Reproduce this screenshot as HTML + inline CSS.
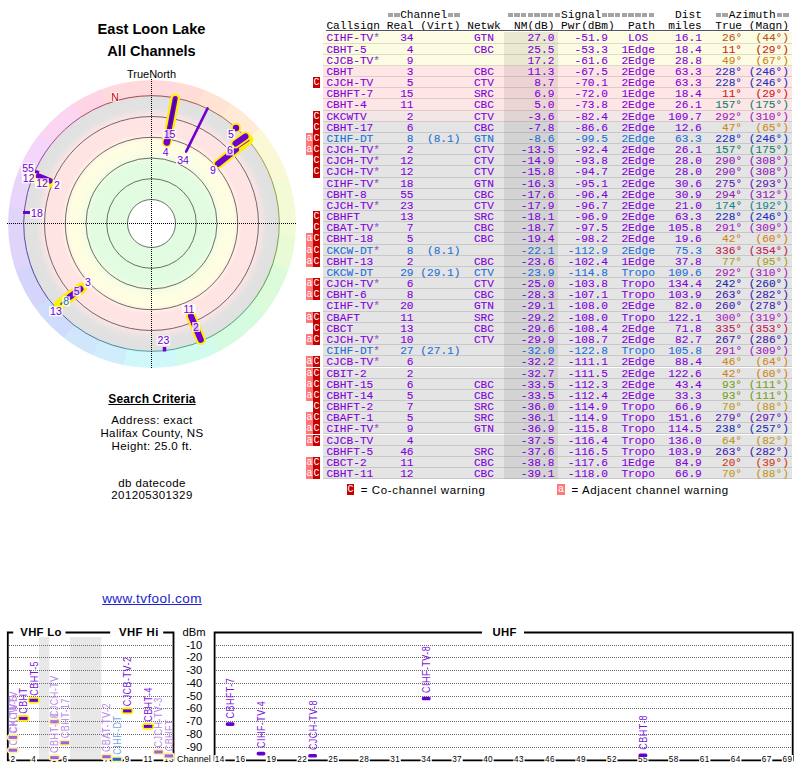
<!DOCTYPE html>
<html><head><meta charset="utf-8"><style>
*{margin:0;padding:0}
html,body{width:800px;height:768px;overflow:hidden;background:#fff;position:relative}
.mono{font-family:"Liberation Mono",monospace;font-size:11.18px;white-space:pre;position:absolute;left:326.4px;line-height:11.15px}
.rt{margin-top:1px;-webkit-text-stroke:0.1px}
.hline{position:absolute;left:326px;width:463px;top:30px;height:1px;background:#555}
.hd{color:#000}
.hd2{}
.eq{font-weight:normal;color:transparent;background:linear-gradient(to bottom,transparent 4.1px,#a4a4a4 4.1px,#a4a4a4 8px,transparent 8px);-webkit-mask-image:repeating-linear-gradient(to right,transparent 0 0.6px,#000 0.6px 6px,transparent 6px 6.704px)}
.row{position:absolute;left:323px;width:469px;height:11.15px;box-shadow:inset 0 -1px 0 rgba(0,0,0,0.12)}
.row.y{background:#fcfce2}
.row.p{background:#ffe6e6}
.row.m{background:#f2e6e6}
.row.g{background:#e4e4e4}
.nmcol{position:absolute;left:504px;width:54px;background:rgba(0,0,0,0.075)}
.mk{position:absolute;width:7px;height:11.15px;color:#fff;font-family:"Liberation Mono",monospace;font-size:10px;line-height:11px;text-align:center}
.ma{left:306px;background:#ff7878}
.mc{left:313px;background:#c40000}
.ttl{position:absolute;left:0;width:303px;text-align:center;font-family:"Liberation Sans",sans-serif;font-weight:bold;font-size:14.6px;line-height:17px}
.tn{position:absolute;left:0;width:303px;text-align:center;font-family:"Liberation Sans",sans-serif;font-size:11px;line-height:12px}
.rt .st{font-style:normal;color:#9060c0}
</style></head><body>
<div style="position:absolute;left:7.5px;top:79.5px;width:288px;height:288px;border-radius:50%;background:conic-gradient(from 0deg,#ffd9dc 0deg 9.2deg,#ffdcd5 9.2deg 21.2deg,#ffe3d5 21.2deg 33.5deg,#ffebd5 33.5deg 48.5deg,#fbf9d5 48.5deg 70.6deg,#f2fbd5 70.6deg 94.8deg,#e8fbd5 94.8deg 108.2deg,#dcfbda 108.2deg 130deg,#d5fbe1 130deg 152.4deg,#d0fbed 152.4deg 169.6deg,#d0f7f9 169.6deg 191.4deg,#d0edfb 191.4deg 204.4deg,#d0e6fb 204.4deg 217.6deg,#d0dcfb 217.6deg 234deg,#d5d5fb 234deg 251.4deg,#dfd5fb 251.4deg 276.8deg,#e8d5fb 276.8deg 291.3deg,#f4d5fb 291.3deg 308deg,#fbd5f2 308deg 326.2deg,#ffd5e6 326.2deg 339deg,#ffd9dc 339deg 360deg)"></div>
<svg style="position:absolute;left:0;top:0" width="300" height="380"><defs><radialGradient id="rg" cx="151.5" cy="223.5" r="128" gradientUnits="userSpaceOnUse"><stop offset="0" stop-color="#e2fce2"/><stop offset="0.47" stop-color="#e2fce2"/><stop offset="0.555" stop-color="#fcfde2"/><stop offset="0.64" stop-color="#fffde2"/><stop offset="0.71" stop-color="#ffe4e4"/><stop offset="0.835" stop-color="#ffe4e4"/><stop offset="0.90" stop-color="#e2e2e2"/><stop offset="1" stop-color="#e0e0e0"/></radialGradient></defs><circle cx="151.5" cy="223.5" r="127.8" fill="url(#rg)"/><circle cx="151.5" cy="223.5" r="24" fill="#fff"/><circle cx="151.5" cy="223.5" r="24" fill="none" stroke="#4a4a4a" stroke-width="0.8"/><circle cx="151.5" cy="223.5" r="44.8" fill="none" stroke="#4a4a4a" stroke-width="0.8"/><circle cx="151.5" cy="223.5" r="65.5" fill="none" stroke="#4a4a4a" stroke-width="0.8"/><circle cx="151.5" cy="223.5" r="86.2" fill="none" stroke="#4a4a4a" stroke-width="0.8"/><circle cx="151.5" cy="223.5" r="107" fill="none" stroke="#4a4a4a" stroke-width="0.8"/><path d="M151.50,95.70 A127.8,127.8 0 0 1 171.93,97.34" fill="none" stroke="#9b3b43" stroke-width="0.9"/><path d="M171.93,97.34 A127.8,127.8 0 0 1 197.72,104.35" fill="none" stroke="#9b4b3b" stroke-width="0.9"/><path d="M197.72,104.35 A127.8,127.8 0 0 1 222.04,116.93" fill="none" stroke="#9b5b3b" stroke-width="0.9"/><path d="M222.04,116.93 A127.8,127.8 0 0 1 247.22,138.82" fill="none" stroke="#9b6d3b" stroke-width="0.9"/><path d="M247.22,138.82 A127.8,127.8 0 0 1 272.04,181.05" fill="none" stroke="#9b963b" stroke-width="0.9"/><path d="M272.04,181.05 A127.8,127.8 0 0 1 278.85,234.19" fill="none" stroke="#849b3b" stroke-width="0.9"/><path d="M278.85,234.19 A127.8,127.8 0 0 1 272.91,263.42" fill="none" stroke="#6b9b3b" stroke-width="0.9"/><path d="M272.91,263.42 A127.8,127.8 0 0 1 249.40,305.65" fill="none" stroke="#419b3b" stroke-width="0.9"/><path d="M249.40,305.65 A127.8,127.8 0 0 1 210.71,336.76" fill="none" stroke="#3b9b59" stroke-width="0.9"/><path d="M210.71,336.76 A127.8,127.8 0 0 1 174.57,349.20" fill="none" stroke="#3b9b7c" stroke-width="0.9"/><path d="M174.57,349.20 A127.8,127.8 0 0 1 126.24,348.78" fill="none" stroke="#3b979b" stroke-width="0.9"/><path d="M126.24,348.78 A127.8,127.8 0 0 1 98.71,339.89" fill="none" stroke="#3b7c9b" stroke-width="0.9"/><path d="M98.71,339.89 A127.8,127.8 0 0 1 73.52,324.75" fill="none" stroke="#3b6c9b" stroke-width="0.9"/><path d="M73.52,324.75 A127.8,127.8 0 0 1 48.11,298.62" fill="none" stroke="#3b569b" stroke-width="0.9"/><path d="M48.11,298.62 A127.8,127.8 0 0 1 30.38,264.26" fill="none" stroke="#3b3b9b" stroke-width="0.9"/><path d="M30.38,264.26 A127.8,127.8 0 0 1 24.60,208.37" fill="none" stroke="#543b9b" stroke-width="0.9"/><path d="M24.60,208.37 A127.8,127.8 0 0 1 32.43,177.08" fill="none" stroke="#6b3b9b" stroke-width="0.9"/><path d="M32.43,177.08 A127.8,127.8 0 0 1 50.79,144.82" fill="none" stroke="#8a3b9b" stroke-width="0.9"/><path d="M50.79,144.82 A127.8,127.8 0 0 1 80.41,117.30" fill="none" stroke="#9b3b84" stroke-width="0.9"/><path d="M80.41,117.30 A127.8,127.8 0 0 1 105.70,104.19" fill="none" stroke="#9b3b62" stroke-width="0.9"/><path d="M105.70,104.19 A127.8,127.8 0 0 1 151.50,95.70" fill="none" stroke="#9b3b43" stroke-width="0.9"/><line x1="7" y1="223.5" x2="296" y2="223.5" stroke="#000" stroke-width="1" stroke-dasharray="1 1"/><line x1="151.5" y1="79" x2="151.5" y2="368" stroke="#000" stroke-width="1" stroke-dasharray="1 1"/><line x1="166.8" y1="142.5" x2="175.2" y2="98.5" stroke="#ffef00" stroke-width="9.5" stroke-linecap="round"/><line x1="168" y1="136" x2="175.2" y2="98.5" stroke="#7000d0" stroke-width="5" stroke-linecap="round"/><line x1="166.8" y1="142.5" x2="168" y2="136.5" stroke="#7000d0" stroke-width="6.5" stroke-linecap="round"/><line x1="169.3" y1="128" x2="175" y2="99.5" stroke="#3a0088" stroke-width="1.6" stroke-linecap="round"/><line x1="186.2" y1="151.5" x2="207.5" y2="108.5" stroke="#7000d0" stroke-width="2.7" stroke-linecap="round"/><line x1="218" y1="163.8" x2="248.5" y2="139.5" stroke="#ffef00" stroke-width="10" stroke-linecap="round"/><line x1="218" y1="163.8" x2="236" y2="149.5" stroke="#7000d0" stroke-width="6" stroke-linecap="round"/><line x1="234" y1="149.5" x2="248" y2="140" stroke="#7000d0" stroke-width="3" stroke-linecap="round"/><line x1="235.5" y1="143.5" x2="245.5" y2="136.5" stroke="#ffef00" stroke-width="10" stroke-linecap="round"/><line x1="235.5" y1="143.5" x2="245.5" y2="136.5" stroke="#7000d0" stroke-width="6" stroke-linecap="round"/><circle cx="236" cy="128" r="5" fill="#ffef00"/><circle cx="236" cy="128" r="3.2" fill="#7000d0"/><line x1="33.5" y1="177.5" x2="49.5" y2="182.5" stroke="#ffef00" stroke-width="10" stroke-linecap="round"/><line x1="38.5" y1="176" x2="50" y2="180.8" stroke="#7000d0" stroke-width="5.5" stroke-linecap="round"/><line x1="35" y1="171.5" x2="39" y2="172.5" stroke="#7000d0" stroke-width="3" stroke-linecap="butt"/><line x1="23" y1="212.5" x2="30" y2="212.5" stroke="#7000d0" stroke-width="3" stroke-linecap="butt"/><line x1="59.5" y1="304.5" x2="81.5" y2="288" stroke="#ffef00" stroke-width="11" stroke-linecap="round"/><line x1="69.5" y1="297" x2="80.5" y2="289" stroke="#7000d0" stroke-width="6" stroke-linecap="round"/><line x1="61" y1="304" x2="65" y2="301" stroke="#2070d0" stroke-width="2" stroke-linecap="round"/><line x1="191" y1="316" x2="200.8" y2="339.8" stroke="#ffef00" stroke-width="10" stroke-linecap="round"/><line x1="191" y1="316" x2="200.8" y2="339.8" stroke="#7000d0" stroke-width="6" stroke-linecap="round"/><line x1="164.5" y1="347" x2="164.5" y2="351.5" stroke="#7000d0" stroke-width="3.5" stroke-linecap="butt"/><rect x="162.6" y="129.1" width="13.8" height="10" fill="#fff" fill-opacity="0.8"/><text x="169.5" y="137.89999999999998" fill="#7000d0" text-anchor="middle" font-family="Liberation Sans" font-size="10.5">15</text><rect x="161.8" y="147.3" width="7.9" height="10" fill="#fff" fill-opacity="0.8"/><text x="165.7" y="156.1" fill="#7000d0" text-anchor="middle" font-family="Liberation Sans" font-size="10.5">4</text><rect x="176.1" y="154.8" width="13.8" height="10" fill="#fff" fill-opacity="0.8"/><text x="183" y="163.6" fill="#7000d0" text-anchor="middle" font-family="Liberation Sans" font-size="10.5">34</text><rect x="227.1" y="129.1" width="7.9" height="10" fill="#fff" fill-opacity="0.8"/><text x="231" y="137.89999999999998" fill="#7000d0" text-anchor="middle" font-family="Liberation Sans" font-size="10.5">5</text><rect x="226.1" y="145.4" width="7.9" height="10" fill="#fff" fill-opacity="0.8"/><text x="230" y="154.2" fill="#7000d0" text-anchor="middle" font-family="Liberation Sans" font-size="10.5">6</text><rect x="209.1" y="165.4" width="7.9" height="10" fill="#fff" fill-opacity="0.8"/><text x="213" y="174.2" fill="#7000d0" text-anchor="middle" font-family="Liberation Sans" font-size="10.5">9</text><rect x="21.1" y="163.3" width="13.8" height="10" fill="#fff" fill-opacity="0.8"/><text x="28" y="172.1" fill="#7000d0" text-anchor="middle" font-family="Liberation Sans" font-size="10.5">55</text><rect x="21.8" y="173.3" width="13.8" height="10" fill="#fff" fill-opacity="0.8"/><text x="28.7" y="182.1" fill="#7000d0" text-anchor="middle" font-family="Liberation Sans" font-size="10.5">12</text><rect x="35.2" y="178.3" width="13.8" height="10" fill="#fff" fill-opacity="0.8"/><text x="42.1" y="187.1" fill="#7000d0" text-anchor="middle" font-family="Liberation Sans" font-size="10.5">12</text><rect x="52.8" y="180.1" width="7.9" height="10" fill="#fff" fill-opacity="0.8"/><text x="56.8" y="188.89999999999998" fill="#7000d0" text-anchor="middle" font-family="Liberation Sans" font-size="10.5">2</text><rect x="30.0" y="208.4" width="13.8" height="10" fill="#fff" fill-opacity="0.8"/><text x="36.9" y="217.2" fill="#7000d0" text-anchor="middle" font-family="Liberation Sans" font-size="10.5">18</text><rect x="84.0" y="277.5" width="7.9" height="10" fill="#fff" fill-opacity="0.8"/><text x="88" y="286.3" fill="#7000d0" text-anchor="middle" font-family="Liberation Sans" font-size="10.5">3</text><rect x="72.8" y="286.5" width="7.9" height="10" fill="#fff" fill-opacity="0.8"/><text x="76.7" y="295.3" fill="#7000d0" text-anchor="middle" font-family="Liberation Sans" font-size="10.5">5</text><rect x="62.2" y="296.3" width="7.9" height="10" fill="#fff" fill-opacity="0.8"/><text x="66.2" y="305.09999999999997" fill="#1a70d8" text-anchor="middle" font-family="Liberation Sans" font-size="10.5">8</text><rect x="49.0" y="306.4" width="13.8" height="10" fill="#fff" fill-opacity="0.8"/><text x="55.9" y="315.2" fill="#7000d0" text-anchor="middle" font-family="Liberation Sans" font-size="10.5">13</text><rect x="182.0" y="304.1" width="13.8" height="10" fill="#fff" fill-opacity="0.8"/><text x="188.9" y="312.9" fill="#7000d0" text-anchor="middle" font-family="Liberation Sans" font-size="10.5">11</text><rect x="192.1" y="322.0" width="7.9" height="10" fill="#fff" fill-opacity="0.8"/><text x="196" y="330.8" fill="#7000d0" text-anchor="middle" font-family="Liberation Sans" font-size="10.5">2</text><rect x="156.5" y="335.6" width="13.8" height="10" fill="#fff" fill-opacity="0.8"/><text x="163.4" y="344.4" fill="#7000d0" text-anchor="middle" font-family="Liberation Sans" font-size="10.5">23</text><rect x="111" y="92" width="8" height="10" fill="#fff" fill-opacity="0.6"/><text x="115" y="101" fill="#d00000" text-anchor="middle" font-family="Liberation Sans" font-size="10.5">N</text></svg>
<div class="ttl" style="top:21.2px">East Loon Lake</div>
<div class="ttl" style="top:43px">All Channels</div>
<div class="tn" style="top:67.6px">TrueNorth</div>
<div class="mono hd" style="top:9.90px">         <b class="eq">==</b>Channel<b class="eq">==</b>       <b class="eq">========</b>Signal<b class="eq">========</b>   Dist  <b class="eq">==</b>Azimuth<b class="eq">==</b></div>
<div class="mono hd hd2" style="top:20.90px">Callsign Real (Virt) Netwk  NM(dB) Pwr(dBm)  Path  miles  True (Magn)</div>
<div class="hline"></div>
<div class="row y" style="top:32.40px"></div>
<div class="row y" style="top:43.57px"></div>
<div class="row y" style="top:54.74px"></div>
<div class="row p" style="top:65.91px"></div>
<div class="row p" style="top:77.08px"></div>
<div class="mk mc" style="top:77.08px">C</div>
<div class="row p" style="top:88.25px"></div>
<div class="row p" style="top:99.42px"></div>
<div class="row m" style="top:110.59px"></div>
<div class="mk mc" style="top:110.59px">C</div>
<div class="row g" style="top:121.76px"></div>
<div class="mk mc" style="top:121.76px">C</div>
<div class="row g" style="top:132.93px"></div>
<div class="mk ma" style="top:132.93px">a</div>
<div class="mk mc" style="top:132.93px">C</div>
<div class="row g" style="top:144.10px"></div>
<div class="mk ma" style="top:144.10px">a</div>
<div class="mk mc" style="top:144.10px">C</div>
<div class="row g" style="top:155.27px"></div>
<div class="mk mc" style="top:155.27px">C</div>
<div class="row g" style="top:166.44px"></div>
<div class="mk mc" style="top:166.44px">C</div>
<div class="row g" style="top:177.61px"></div>
<div class="row g" style="top:188.78px"></div>
<div class="row g" style="top:199.95px"></div>
<div class="row g" style="top:211.12px"></div>
<div class="mk mc" style="top:211.12px">C</div>
<div class="row g" style="top:222.29px"></div>
<div class="mk mc" style="top:222.29px">C</div>
<div class="row g" style="top:233.46px"></div>
<div class="mk ma" style="top:233.46px">a</div>
<div class="mk mc" style="top:233.46px">C</div>
<div class="row g" style="top:244.63px"></div>
<div class="mk ma" style="top:244.63px">a</div>
<div class="mk mc" style="top:244.63px">C</div>
<div class="row g" style="top:255.80px"></div>
<div class="mk ma" style="top:255.80px">a</div>
<div class="mk mc" style="top:255.80px">C</div>
<div class="row g" style="top:266.97px"></div>
<div class="row g" style="top:278.14px"></div>
<div class="mk ma" style="top:278.14px">a</div>
<div class="mk mc" style="top:278.14px">C</div>
<div class="row g" style="top:289.31px"></div>
<div class="mk ma" style="top:289.31px">a</div>
<div class="mk mc" style="top:289.31px">C</div>
<div class="row g" style="top:300.48px"></div>
<div class="row g" style="top:311.65px"></div>
<div class="mk ma" style="top:311.65px">a</div>
<div class="mk mc" style="top:311.65px">C</div>
<div class="row g" style="top:322.82px"></div>
<div class="mk mc" style="top:322.82px">C</div>
<div class="row g" style="top:333.99px"></div>
<div class="mk ma" style="top:333.99px">a</div>
<div class="mk mc" style="top:333.99px">C</div>
<div class="row g" style="top:345.16px"></div>
<div class="row g" style="top:356.33px"></div>
<div class="mk ma" style="top:356.33px">a</div>
<div class="mk mc" style="top:356.33px">C</div>
<div class="row g" style="top:367.50px"></div>
<div class="mk ma" style="top:367.50px">a</div>
<div class="mk mc" style="top:367.50px">C</div>
<div class="row g" style="top:378.67px"></div>
<div class="mk ma" style="top:378.67px">a</div>
<div class="mk mc" style="top:378.67px">C</div>
<div class="row g" style="top:389.84px"></div>
<div class="mk ma" style="top:389.84px">a</div>
<div class="mk mc" style="top:389.84px">C</div>
<div class="row g" style="top:401.01px"></div>
<div class="mk mc" style="top:401.01px">C</div>
<div class="row g" style="top:412.18px"></div>
<div class="mk ma" style="top:412.18px">a</div>
<div class="mk mc" style="top:412.18px">C</div>
<div class="row g" style="top:423.35px"></div>
<div class="mk ma" style="top:423.35px">a</div>
<div class="mk mc" style="top:423.35px">C</div>
<div class="row g" style="top:434.52px"></div>
<div class="mk ma" style="top:434.52px">a</div>
<div class="mk mc" style="top:434.52px">C</div>
<div class="row g" style="top:445.69px"></div>
<div class="row g" style="top:456.86px"></div>
<div class="mk ma" style="top:456.86px">a</div>
<div class="mk mc" style="top:456.86px">C</div>
<div class="row g" style="top:468.03px"></div>
<div class="mk ma" style="top:468.03px">a</div>
<div class="mk mc" style="top:468.03px">C</div>
<div class="nmcol" style="top:32.40px;height:446.80px"></div>
<div class="mono rt" style="top:32.40px;color:#8200dc">CIHF-TV<i class="st">*</i>   34         GTN     27.0   -51.9   LOS    16.1<span style="color:#b85818">   26°  (44°)</span></div>
<div class="mono rt" style="top:43.57px;color:#8200dc">CBHT-5      4         CBC     25.5   -53.3  1Edge   18.4<span style="color:#d01818">   11°  (29°)</span></div>
<div class="mono rt" style="top:54.74px;color:#8200dc">CJCB-TV<i class="st">*</i>    9                 17.2   -61.6  2Edge   28.8<span style="color:#c88418">   49°  (67°)</span></div>
<div class="mono rt" style="top:65.91px;color:#8200dc">CBHT        3         CBC     11.3   -67.5  2Edge   63.3<span style="color:#2030c0">  228° (246°)</span></div>
<div class="mono rt" style="top:77.08px;color:#8200dc">CJCH-TV     5         CTV      8.7   -70.1  2Edge   63.3<span style="color:#2030c0">  228° (246°)</span></div>
<div class="mono rt" style="top:88.25px;color:#8200dc">CBHFT-7    15         SRC      6.9   -72.0  1Edge   18.4<span style="color:#d01818">   11°  (29°)</span></div>
<div class="mono rt" style="top:99.42px;color:#8200dc">CBHT-4     11         CBC      5.0   -73.8  2Edge   26.1<span style="color:#108070">  157° (175°)</span></div>
<div class="mono rt" style="top:110.59px;color:#8200dc">CKCWTV      2         CTV     -3.6   -82.4  2Edge  109.7<span style="color:#a820b8">  292° (310°)</span></div>
<div class="mono rt" style="top:121.76px;color:#8200dc">CBHT-17     6         CBC     -7.8   -86.6  2Edge   12.6<span style="color:#d08818">   47°  (65°)</span></div>
<div class="mono rt" style="top:132.93px;color:#1a70d8">CIHF-DT     8  (8.1)  GTN     -8.6   -99.5  2Edge   63.3<span style="color:#2030c0">  228° (246°)</span></div>
<div class="mono rt" style="top:144.10px;color:#8200dc">CJCH-TV<i class="st">*</i>    2         CTV    -13.5   -92.4  2Edge   26.1<span style="color:#108070">  157° (175°)</span></div>
<div class="mono rt" style="top:155.27px;color:#8200dc">CJCH-TV<i class="st">*</i>   12         CTV    -14.9   -93.8  2Edge   28.0<span style="color:#9020b8">  290° (308°)</span></div>
<div class="mono rt" style="top:166.44px;color:#8200dc">CJCH-TV<i class="st">*</i>   12         CTV    -15.8   -94.7  2Edge   28.0<span style="color:#9020b8">  290° (308°)</span></div>
<div class="mono rt" style="top:177.61px;color:#8200dc">CIHF-TV<i class="st">*</i>   18         GTN    -16.3   -95.1  2Edge   30.6<span style="color:#6020b8">  275° (293°)</span></div>
<div class="mono rt" style="top:188.78px;color:#8200dc">CBHT-8     55         CBC    -17.6   -96.4  2Edge   30.9<span style="color:#9020b8">  294° (312°)</span></div>
<div class="mono rt" style="top:199.95px;color:#8200dc">CJCH-TV<i class="st">*</i>   23         CTV    -17.9   -96.7  2Edge   21.0<span style="color:#108888">  174° (192°)</span></div>
<div class="mono rt" style="top:211.12px;color:#8200dc">CBHFT      13         SRC    -18.1   -96.9  2Edge   63.3<span style="color:#2030c0">  228° (246°)</span></div>
<div class="mono rt" style="top:222.29px;color:#8200dc">CBAT-TV<i class="st">*</i>    7         CBC    -18.7   -97.5  2Edge  105.8<span style="color:#a020c0">  291° (309°)</span></div>
<div class="mono rt" style="top:233.46px;color:#8200dc">CBHT-18     5         CBC    -19.4   -98.2  2Edge   19.6<span style="color:#d08418">   42°  (60°)</span></div>
<div class="mono rt" style="top:244.63px;color:#1a70d8">CKCW-DT<i class="st">*</i>    8  (8.1)         -22.1  -112.9  2Edge   75.3<span style="color:#c02050">  336° (354°)</span></div>
<div class="mono rt" style="top:255.80px;color:#8200dc">CBHT-13     2         CBC    -23.6  -102.4  1Edge   37.8<span style="color:#a8a020">   77°  (95°)</span></div>
<div class="mono rt" style="top:266.97px;color:#1a70d8">CKCW-DT    29 (29.1)  CTV    -23.9  -114.8  Tropo  109.6<span style="color:#a820b8">  292° (310°)</span></div>
<div class="mono rt" style="top:278.14px;color:#8200dc">CJCH-TV<i class="st">*</i>    6         CTV    -25.0  -103.8  Tropo  134.4<span style="color:#2828a8">  242° (260°)</span></div>
<div class="mono rt" style="top:289.31px;color:#8200dc">CBHT-6      8         CBC    -28.3  -107.1  Tropo  103.9<span style="color:#4020b0">  263° (282°)</span></div>
<div class="mono rt" style="top:300.48px;color:#8200dc">CIHF-TV<i class="st">*</i>   20         GTN    -29.1  -108.0  2Edge   82.0<span style="color:#4020b0">  260° (278°)</span></div>
<div class="mono rt" style="top:311.65px;color:#8200dc">CBAFT      11         SRC    -29.2  -108.0  Tropo  122.1<span style="color:#b020c0">  300° (319°)</span></div>
<div class="mono rt" style="top:322.82px;color:#8200dc">CBCT       13         CBC    -29.6  -108.4  2Edge   71.8<span style="color:#c02060">  335° (353°)</span></div>
<div class="mono rt" style="top:333.99px;color:#8200dc">CJCH-TV<i class="st">*</i>   10         CTV    -29.9  -108.7  2Edge   82.7<span style="color:#4420a8">  267° (286°)</span></div>
<div class="mono rt" style="top:345.16px;color:#1a70d8">CIHF-DT<i class="st">*</i>   27 (27.1)         -32.0  -122.8  Tropo  105.8<span style="color:#a020c0">  291° (309°)</span></div>
<div class="mono rt" style="top:356.33px;color:#8200dc">CJCB-TV<i class="st">*</i>    6                -32.2  -111.1  2Edge   88.4<span style="color:#d08818">   46°  (64°)</span></div>
<div class="mono rt" style="top:367.50px;color:#8200dc">CBIT-2      2                -32.7  -111.5  2Edge  122.6<span style="color:#d08418">   42°  (60°)</span></div>
<div class="mono rt" style="top:378.67px;color:#8200dc">CBHT-15     6         CBC    -33.5  -112.3  2Edge   43.4<span style="color:#70a020">   93° (111°)</span></div>
<div class="mono rt" style="top:389.84px;color:#8200dc">CBHT-14     5         CBC    -33.5  -112.4  2Edge   33.3<span style="color:#70a020">   93° (111°)</span></div>
<div class="mono rt" style="top:401.01px;color:#8200dc">CBHFT-2     7         SRC    -36.0  -114.9  Tropo   66.9<span style="color:#c09a18">   70°  (88°)</span></div>
<div class="mono rt" style="top:412.18px;color:#8200dc">CBAFT-1     5         SRC    -36.1  -114.9  Tropo  151.6<span style="color:#6020b8">  279° (297°)</span></div>
<div class="mono rt" style="top:423.35px;color:#8200dc">CIHF-TV<i class="st">*</i>    9         GTN    -36.9  -115.8  Tropo  114.5<span style="color:#2030b8">  238° (257°)</span></div>
<div class="mono rt" style="top:434.52px;color:#8200dc">CJCB-TV     4                -37.5  -116.4  Tropo  136.0<span style="color:#c09418">   64°  (82°)</span></div>
<div class="mono rt" style="top:445.69px;color:#8200dc">CBHFT-5    46         SRC    -37.6  -116.5  Tropo  103.9<span style="color:#4020b0">  263° (282°)</span></div>
<div class="mono rt" style="top:456.86px;color:#8200dc">CBCT-2     11         CBC    -38.8  -117.6  1Edge   84.9<span style="color:#d03818">   20°  (39°)</span></div>
<div class="mono rt" style="top:468.03px;color:#8200dc">CBHT-11    12         CBC    -39.1  -118.0  Tropo   66.9<span style="color:#c09a18">   70°  (88°)</span></div>
<div style="position:absolute;left:0;width:304px;text-align:center;font-family:'Liberation Sans',sans-serif;white-space:nowrap;top:391.8px;font-size:12px;font-weight:bold;line-height:14px;letter-spacing:0.13px"><u>Search Criteria</u></div>
<div style="position:absolute;left:0;width:304px;text-align:center;font-family:'Liberation Sans',sans-serif;white-space:nowrap;top:413.8px;font-size:11.5px;line-height:13px;letter-spacing:0.38px">Address: exact</div>
<div style="position:absolute;left:0;width:304px;text-align:center;font-family:'Liberation Sans',sans-serif;white-space:nowrap;top:426.8px;font-size:11.5px;line-height:13px;letter-spacing:0.38px">Halifax County, NS</div>
<div style="position:absolute;left:0;width:304px;text-align:center;font-family:'Liberation Sans',sans-serif;white-space:nowrap;top:439.6px;font-size:11.5px;line-height:13px;letter-spacing:0.38px">Height: 25.0 ft.</div>
<div style="position:absolute;left:0;width:304px;text-align:center;font-family:'Liberation Sans',sans-serif;white-space:nowrap;top:476.6px;font-size:11.5px;line-height:13px;letter-spacing:0.38px">db datecode</div>
<div style="position:absolute;left:0;width:304px;text-align:center;font-family:'Liberation Sans',sans-serif;white-space:nowrap;top:488.5px;font-size:11.5px;line-height:13px;letter-spacing:0.38px">201205301329</div>
<div style="position:absolute;left:0;width:304px;text-align:center;font-family:'Liberation Sans',sans-serif;white-space:nowrap;top:591px;font-size:13.5px;line-height:15px;letter-spacing:0.42px;color:#2222cc"><u>www.tvfool.com</u></div>
<div class="mk mc" style="left:347px;top:483.5px;height:11px;width:7px;">C</div>
<div style="position:absolute;font-family:'Liberation Sans',sans-serif;font-size:11.5px;line-height:13px;white-space:nowrap;letter-spacing:0.63px;left:360.7px;top:484px">= Co-channel warning</div>
<div class="mk ma" style="left:557px;top:483.5px;height:11px;width:8px;">a</div>
<div style="position:absolute;font-family:'Liberation Sans',sans-serif;font-size:11.5px;line-height:13px;white-space:nowrap;letter-spacing:0.63px;left:571.5px;top:484px">= Adjacent channel warning</div>
<svg style="position:absolute;left:0;top:600px" width="800" height="168"><g transform="translate(0,-600)"><rect x="38.9" y="637" width="10.4" height="123" fill="#e8e8e8"/><rect x="70.1" y="637" width="31.2" height="123" fill="#e8e8e8"/><line x1="9" y1="645.5" x2="173" y2="645.5" stroke="#6a6a6a" stroke-width="1" stroke-dasharray="1 1"/><line x1="216" y1="645.5" x2="792" y2="645.5" stroke="#6a6a6a" stroke-width="1" stroke-dasharray="1 1"/><line x1="9" y1="657.5" x2="173" y2="657.5" stroke="#6a6a6a" stroke-width="1" stroke-dasharray="1 1"/><line x1="216" y1="657.5" x2="792" y2="657.5" stroke="#6a6a6a" stroke-width="1" stroke-dasharray="1 1"/><line x1="9" y1="670.5" x2="173" y2="670.5" stroke="#6a6a6a" stroke-width="1" stroke-dasharray="1 1"/><line x1="216" y1="670.5" x2="792" y2="670.5" stroke="#6a6a6a" stroke-width="1" stroke-dasharray="1 1"/><line x1="9" y1="683.5" x2="173" y2="683.5" stroke="#6a6a6a" stroke-width="1" stroke-dasharray="1 1"/><line x1="216" y1="683.5" x2="792" y2="683.5" stroke="#6a6a6a" stroke-width="1" stroke-dasharray="1 1"/><line x1="9" y1="696.5" x2="173" y2="696.5" stroke="#6a6a6a" stroke-width="1" stroke-dasharray="1 1"/><line x1="216" y1="696.5" x2="792" y2="696.5" stroke="#6a6a6a" stroke-width="1" stroke-dasharray="1 1"/><line x1="9" y1="708.5" x2="173" y2="708.5" stroke="#6a6a6a" stroke-width="1" stroke-dasharray="1 1"/><line x1="216" y1="708.5" x2="792" y2="708.5" stroke="#6a6a6a" stroke-width="1" stroke-dasharray="1 1"/><line x1="9" y1="721.5" x2="173" y2="721.5" stroke="#6a6a6a" stroke-width="1" stroke-dasharray="1 1"/><line x1="216" y1="721.5" x2="792" y2="721.5" stroke="#6a6a6a" stroke-width="1" stroke-dasharray="1 1"/><line x1="9" y1="734.5" x2="173" y2="734.5" stroke="#6a6a6a" stroke-width="1" stroke-dasharray="1 1"/><line x1="216" y1="734.5" x2="792" y2="734.5" stroke="#6a6a6a" stroke-width="1" stroke-dasharray="1 1"/><line x1="9" y1="747.5" x2="173" y2="747.5" stroke="#6a6a6a" stroke-width="1" stroke-dasharray="1 1"/><line x1="216" y1="747.5" x2="792" y2="747.5" stroke="#6a6a6a" stroke-width="1" stroke-dasharray="1 1"/><path d="M13.2,632.5 H7.8 V760.3 H173.5 V632.5 H163.2" fill="none" stroke="#000" stroke-width="1.8"/><line x1="65.5" y1="632.5" x2="110.2" y2="632.5" stroke="#000" stroke-width="1.8"/><path d="M482,632.5 H214.6 V760.3 H792.7 V632.5 H524" fill="none" stroke="#000" stroke-width="1.8"/><text x="20.3" y="635.9" font-family="Liberation Sans" font-weight="bold" font-size="11.3" letter-spacing="0.3">VHF Lo</text><text x="118.9" y="635.9" font-family="Liberation Sans" font-weight="bold" font-size="11.3" letter-spacing="0.5">VHF Hi</text><text x="492.6" y="636" font-family="Liberation Sans" font-weight="bold" font-size="11.3" letter-spacing="0.3">UHF</text><text x="182.5" y="635.8" font-family="Liberation Sans" font-size="11.2">dBm</text><text x="202.3" y="649.2" text-anchor="end" font-family="Liberation Sans" font-size="11.2">-10</text><text x="202.3" y="661.2" text-anchor="end" font-family="Liberation Sans" font-size="11.2">-20</text><text x="202.3" y="674.2" text-anchor="end" font-family="Liberation Sans" font-size="11.2">-30</text><text x="202.3" y="687.2" text-anchor="end" font-family="Liberation Sans" font-size="11.2">-40</text><text x="202.3" y="700.2" text-anchor="end" font-family="Liberation Sans" font-size="11.2">-50</text><text x="202.3" y="712.2" text-anchor="end" font-family="Liberation Sans" font-size="11.2">-60</text><text x="202.3" y="725.2" text-anchor="end" font-family="Liberation Sans" font-size="11.2">-70</text><text x="202.3" y="738.2" text-anchor="end" font-family="Liberation Sans" font-size="11.2">-80</text><text x="202.3" y="751.2" text-anchor="end" font-family="Liberation Sans" font-size="11.2">-90</text><text x="177" y="761.5" font-family="Liberation Sans" font-size="9" letter-spacing="0.05">Channel</text><rect x="9.6" y="755" width="6.6" height="7" fill="#fff"/><text x="12.9" y="762" text-anchor="middle" font-family="Liberation Sans" font-size="8.2" letter-spacing="0.4">2</text><rect x="30.4" y="755" width="6.6" height="7" fill="#fff"/><text x="33.7" y="762" text-anchor="middle" font-family="Liberation Sans" font-size="8.2" letter-spacing="0.4">4</text><rect x="51.2" y="755" width="6.6" height="7" fill="#fff"/><text x="54.5" y="762" text-anchor="middle" font-family="Liberation Sans" font-size="8.2" letter-spacing="0.4">5</text><rect x="61.6" y="755" width="6.6" height="7" fill="#fff"/><text x="64.9" y="762" text-anchor="middle" font-family="Liberation Sans" font-size="8.2" letter-spacing="0.4">6</text><rect x="103.2" y="755" width="6.6" height="7" fill="#fff"/><text x="106.5" y="762" text-anchor="middle" font-family="Liberation Sans" font-size="8.2" letter-spacing="0.4">7</text><rect x="124.0" y="755" width="6.6" height="7" fill="#fff"/><text x="127.3" y="762" text-anchor="middle" font-family="Liberation Sans" font-size="8.2" letter-spacing="0.4">9</text><rect x="142.5" y="755" width="11.2" height="7" fill="#fff"/><text x="148.1" y="762" text-anchor="middle" font-family="Liberation Sans" font-size="8.2" letter-spacing="0.4">11</text><rect x="163.3" y="755" width="11.2" height="7" fill="#fff"/><text x="168.9" y="762" text-anchor="middle" font-family="Liberation Sans" font-size="8.2" letter-spacing="0.4">13</text><rect x="214.2" y="755" width="11.2" height="7" fill="#fff"/><text x="219.8" y="762" text-anchor="middle" font-family="Liberation Sans" font-size="8.2" letter-spacing="0.4">14</text><rect x="234.8" y="755" width="11.2" height="7" fill="#fff"/><text x="240.4" y="762" text-anchor="middle" font-family="Liberation Sans" font-size="8.2" letter-spacing="0.4">16</text><rect x="265.8" y="755" width="11.2" height="7" fill="#fff"/><text x="271.4" y="762" text-anchor="middle" font-family="Liberation Sans" font-size="8.2" letter-spacing="0.4">19</text><rect x="296.7" y="755" width="11.2" height="7" fill="#fff"/><text x="302.3" y="762" text-anchor="middle" font-family="Liberation Sans" font-size="8.2" letter-spacing="0.4">22</text><rect x="327.7" y="755" width="11.2" height="7" fill="#fff"/><text x="333.3" y="762" text-anchor="middle" font-family="Liberation Sans" font-size="8.2" letter-spacing="0.4">25</text><rect x="358.6" y="755" width="11.2" height="7" fill="#fff"/><text x="364.2" y="762" text-anchor="middle" font-family="Liberation Sans" font-size="8.2" letter-spacing="0.4">28</text><rect x="389.6" y="755" width="11.2" height="7" fill="#fff"/><text x="395.2" y="762" text-anchor="middle" font-family="Liberation Sans" font-size="8.2" letter-spacing="0.4">31</text><rect x="420.6" y="755" width="11.2" height="7" fill="#fff"/><text x="426.2" y="762" text-anchor="middle" font-family="Liberation Sans" font-size="8.2" letter-spacing="0.4">34</text><rect x="451.5" y="755" width="11.2" height="7" fill="#fff"/><text x="457.1" y="762" text-anchor="middle" font-family="Liberation Sans" font-size="8.2" letter-spacing="0.4">37</text><rect x="482.5" y="755" width="11.2" height="7" fill="#fff"/><text x="488.1" y="762" text-anchor="middle" font-family="Liberation Sans" font-size="8.2" letter-spacing="0.4">40</text><rect x="513.4" y="755" width="11.2" height="7" fill="#fff"/><text x="519.0" y="762" text-anchor="middle" font-family="Liberation Sans" font-size="8.2" letter-spacing="0.4">43</text><rect x="544.4" y="755" width="11.2" height="7" fill="#fff"/><text x="550.0" y="762" text-anchor="middle" font-family="Liberation Sans" font-size="8.2" letter-spacing="0.4">46</text><rect x="575.4" y="755" width="11.2" height="7" fill="#fff"/><text x="581.0" y="762" text-anchor="middle" font-family="Liberation Sans" font-size="8.2" letter-spacing="0.4">49</text><rect x="606.3" y="755" width="11.2" height="7" fill="#fff"/><text x="611.9" y="762" text-anchor="middle" font-family="Liberation Sans" font-size="8.2" letter-spacing="0.4">52</text><rect x="637.3" y="755" width="11.2" height="7" fill="#fff"/><text x="642.9" y="762" text-anchor="middle" font-family="Liberation Sans" font-size="8.2" letter-spacing="0.4">55</text><rect x="668.2" y="755" width="11.2" height="7" fill="#fff"/><text x="673.8" y="762" text-anchor="middle" font-family="Liberation Sans" font-size="8.2" letter-spacing="0.4">58</text><rect x="699.2" y="755" width="11.2" height="7" fill="#fff"/><text x="704.8" y="762" text-anchor="middle" font-family="Liberation Sans" font-size="8.2" letter-spacing="0.4">61</text><rect x="730.2" y="755" width="11.2" height="7" fill="#fff"/><text x="735.8" y="762" text-anchor="middle" font-family="Liberation Sans" font-size="8.2" letter-spacing="0.4">64</text><rect x="761.1" y="755" width="11.2" height="7" fill="#fff"/><text x="766.7" y="762" text-anchor="middle" font-family="Liberation Sans" font-size="8.2" letter-spacing="0.4">67</text><rect x="781.8" y="755" width="11.2" height="7" fill="#fff"/><text x="787.4" y="762" text-anchor="middle" font-family="Liberation Sans" font-size="8.2" letter-spacing="0.4">69</text><rect x="6.9" y="746.9" width="12" height="6.6" rx="3.3" fill="#fbf3a0"/><rect x="8.7" y="748.7" width="8.4" height="3" fill="#a060e0"/><text transform="translate(16.8,745.6) rotate(-90) scale(0.88,1)" fill="#b888e8" font-family="Liberation Sans" font-size="10.2" letter-spacing="0.55">CJCH-TV-5</text><rect x="6.9" y="734.1" width="12" height="6.6" rx="3.3" fill="#fbf3a0"/><rect x="8.7" y="735.9" width="8.4" height="3" fill="#a060e0"/><text transform="translate(16.8,732.8) rotate(-90) scale(0.88,1)" fill="#b888e8" font-family="Liberation Sans" font-size="10.2" letter-spacing="0.55">CKCWTV</text><rect x="17.3" y="715.1" width="12" height="6.6" rx="3.3" fill="#ffee00"/><rect x="19.1" y="716.9" width="8.4" height="3" fill="#6800d4"/><text transform="translate(27.2,713.8) rotate(-90) scale(0.88,1)" fill="#7a14dc" font-family="Liberation Sans" font-size="10.2" letter-spacing="0.55">CBHT</text><rect x="27.7" y="697.0" width="12" height="6.6" rx="3.3" fill="#ffee00"/><rect x="29.5" y="698.8" width="8.4" height="3" fill="#6800d4"/><text transform="translate(37.6,695.7) rotate(-90) scale(0.88,1)" fill="#7a14dc" font-family="Liberation Sans" font-size="10.2" letter-spacing="0.55">CBHT-5</text><rect x="48.5" y="718.4" width="12" height="6.6" rx="3.3" fill="#fbf3a0"/><rect x="50.3" y="720.2" width="8.4" height="3" fill="#a060e0"/><text transform="translate(58.4,717.1) rotate(-90) scale(0.88,1)" fill="#b888e8" font-family="Liberation Sans" font-size="10.2" letter-spacing="0.55">CJCH-TV</text><rect x="48.5" y="754.3" width="12" height="6.6" rx="3.3" fill="#fbf3a0"/><rect x="50.3" y="756.1" width="8.4" height="3" fill="#a060e0"/><text transform="translate(58.4,753.0) rotate(-90) scale(0.88,1)" fill="#b888e8" font-family="Liberation Sans" font-size="10.2" letter-spacing="0.55">CBHT-18</text><rect x="58.9" y="739.5" width="12" height="6.6" rx="3.3" fill="#fbf3a0"/><rect x="60.7" y="741.3" width="8.4" height="3" fill="#a060e0"/><text transform="translate(68.8,738.2) rotate(-90) scale(0.88,1)" fill="#b888e8" font-family="Liberation Sans" font-size="10.2" letter-spacing="0.55">CBHT-17</text><rect x="100.5" y="753.4" width="12" height="6.6" rx="3.3" fill="#fbf3a0"/><rect x="102.3" y="755.2" width="8.4" height="3" fill="#a060e0"/><text transform="translate(110.4,752.1) rotate(-90) scale(0.88,1)" fill="#b888e8" font-family="Liberation Sans" font-size="10.2" letter-spacing="0.55">CBAT-TV-2</text><rect x="110.9" y="756.0" width="12" height="6.6" rx="3.3" fill="#fbf3a0"/><rect x="112.7" y="757.8" width="8.4" height="3" fill="#2868c8"/><text transform="translate(120.8,754.7) rotate(-90) scale(0.88,1)" fill="#78a8e8" font-family="Liberation Sans" font-size="10.2" letter-spacing="0.55">CIHF-DT</text><rect x="121.3" y="707.6" width="12" height="6.6" rx="3.3" fill="#ffee00"/><rect x="123.1" y="709.4" width="8.4" height="3" fill="#6800d4"/><text transform="translate(131.2,706.3) rotate(-90) scale(0.88,1)" fill="#7a14dc" font-family="Liberation Sans" font-size="10.2" letter-spacing="0.55">CJCB-TV-2</text><rect x="142.1" y="723.1" width="12" height="6.6" rx="3.3" fill="#ffee00"/><rect x="143.9" y="724.9" width="8.4" height="3" fill="#6800d4"/><text transform="translate(152.0,721.8) rotate(-90) scale(0.88,1)" fill="#7a14dc" font-family="Liberation Sans" font-size="10.2" letter-spacing="0.55">CBHT-4</text><rect x="152.5" y="748.7" width="12" height="6.6" rx="3.3" fill="#fbf3a0"/><rect x="154.3" y="750.5" width="8.4" height="3" fill="#a060e0"/><text transform="translate(162.4,747.4) rotate(-90) scale(0.88,1)" fill="#b888e8" font-family="Liberation Sans" font-size="10.2" letter-spacing="0.55">CJCH-TV-3</text><rect x="162.9" y="752.6" width="12" height="6.6" rx="3.3" fill="#fbf3a0"/><rect x="164.7" y="754.4" width="8.4" height="3" fill="#a060e0"/><text transform="translate(172.8,751.3) rotate(-90) scale(0.88,1)" fill="#b888e8" font-family="Liberation Sans" font-size="10.2" letter-spacing="0.55">CBHFT</text><rect x="225.7" y="722.3" width="8.8" height="3.6" rx="1.6" fill="#6800d4"/><text transform="translate(234.0,718.5) rotate(-90) scale(0.88,1)" fill="#7a14dc" font-family="Liberation Sans" font-size="10.2" letter-spacing="0.55">CBHFT-7</text><rect x="256.6" y="751.8" width="8.8" height="3.6" rx="1.6" fill="#6800d4"/><text transform="translate(264.9,748.0) rotate(-90) scale(0.88,1)" fill="#7a14dc" font-family="Liberation Sans" font-size="10.2" letter-spacing="0.55">CIHF-TV-4</text><rect x="308.2" y="753.9" width="8.8" height="3.6" rx="1.6" fill="#6800d4"/><text transform="translate(316.5,750.1) rotate(-90) scale(0.88,1)" fill="#7a14dc" font-family="Liberation Sans" font-size="10.2" letter-spacing="0.55">CJCH-TV-8</text><rect x="421.8" y="696.7" width="8.8" height="3.6" rx="1.6" fill="#6800d4"/><text transform="translate(430.1,692.9) rotate(-90) scale(0.88,1)" fill="#7a14dc" font-family="Liberation Sans" font-size="10.2" letter-spacing="0.55">CIHF-TV-8</text><rect x="638.5" y="753.5" width="8.8" height="3.6" rx="1.6" fill="#6800d4"/><text transform="translate(646.8,749.7) rotate(-90) scale(0.88,1)" fill="#7a14dc" font-family="Liberation Sans" font-size="10.2" letter-spacing="0.55">CBHT-8</text></g></svg>
</body></html>
